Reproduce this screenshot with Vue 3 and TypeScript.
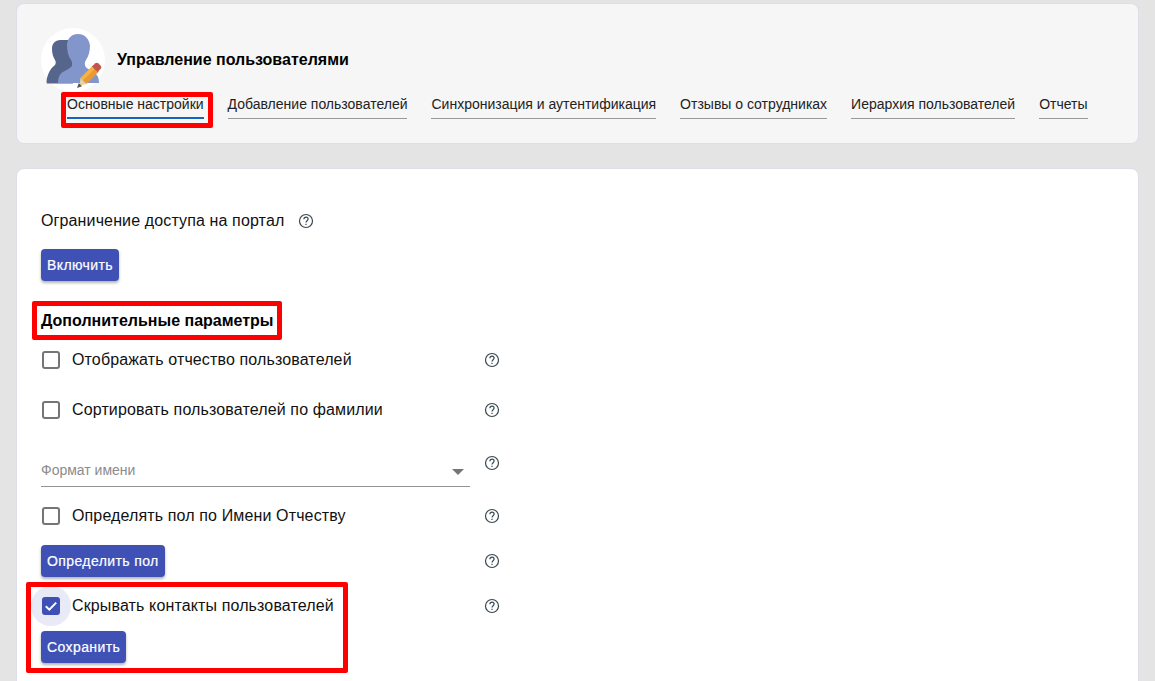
<script setup lang="ts">
import { ref } from "vue";

const tabs = [
  "Основные настройки",
  "Добавление пользователей",
  "Синхронизация и аутентификация",
  "Отзывы о сотрудниках",
  "Иерархия пользователей",
  "Отчеты",
];

const showPatronymic = ref(false);
const sortBySurname = ref(false);
const detectGender = ref(false);
const hideContacts = ref(true);
</script>

<template>
  <div class="page">
    <header class="card head-card">
      <div class="head-top">
        <svg class="avatar" width="64" height="64" viewBox="0 0 64 64">
          <circle cx="32" cy="32" r="32" fill="#fff" />
          <path
            d="M19.500 12c-5.500 0-8.500 3.500-8.500 9 0 4 1 8 3 11 1.200 1.800 1 4-.5 5.500-2.500 2-5.500 5-7.500 12.500-.5 2-.5 5.500 0 5.500h26V12.800c-3-.5-4-.8-12.500-.8z"
            fill="#56658c"
          />
          <path
            d="M37 6c-6.500 0-11 4.500-11 11.500 0 6 1.500 11 4 14.500 1.500 2 1.500 5 .5 6.500-2 3-9.500 4.500-12 9-1 2-1.500 5-1.500 7.500h41c0-2.500-.5-5-1.500-7-2.500-4.500-10-6-12-9.500-1-1.500-1-4.500.5-6.500 2.500-3.500 4-8.500 4-14.500C48 10.500 43.500 6 37 6z"
            fill="#8296cc"
          />
          <path d="M39.500 50 52 37.500l6 6L45.500 56z" fill="#eb9b2b" />
          <path d="M39.500 50 52 37.500l2.500 2.500L42 52.500z" fill="#f3b24d" />
          <path d="M51 38.500l3-3c1-1 2.500-1 3.500 0l2 2c1 1 1 2.500 0 3.500l-3 3z" fill="#c0564c" />
          <path d="M39.500 50l6 6-7 2z" fill="#e8d3a8" />
          <path d="M36 60l1.800-5 3.200 3.200z" fill="#555" />
        </svg>
        <h1 class="head-title">Управление пользователями</h1>
      </div>
      <nav class="tabs">
        <a v-for="(tab, i) in tabs" :key="tab" class="tab" :class="{ 'is-active': i === 0, marked: i === 0 }">{{ tab }}</a>
      </nav>
    </header>

    <main class="card body-card">
      <div class="access-row">
        <span>Ограничение доступа на портал</span>
        <svg class="help" viewBox="0 0 16 16"><circle cx="8" cy="8" r="6.500" /><path d="M5.900 6.300c0-1.300.9-2.100 2.100-2.100s2.100.8 2.100 1.900c0 1.600-2.100 1.700-2.100 3.500M8 10.700v1.400" /></svg>
      </div>
      <button class="btn btn-enable">Включить</button>

      <h2 class="section-title"><span class="marked">Дополнительные параметры</span></h2>

      <div class="opt-row row-first">
        <label class="check-label">
          <input v-model="showPatronymic" type="checkbox" class="check-input" />
          <span class="check-box"></span>
          Отображать отчество пользователей
        </label>
        <svg class="help" viewBox="0 0 16 16"><circle cx="8" cy="8" r="6.500" /><path d="M5.900 6.300c0-1.300.9-2.100 2.100-2.100s2.100.8 2.100 1.900c0 1.600-2.100 1.700-2.100 3.500M8 10.700v1.400" /></svg>
      </div>

      <div class="opt-row row-second">
        <label class="check-label">
          <input v-model="sortBySurname" type="checkbox" class="check-input" />
          <span class="check-box"></span>
          Сортировать пользователей по фамилии
        </label>
        <svg class="help" viewBox="0 0 16 16"><circle cx="8" cy="8" r="6.500" /><path d="M5.900 6.300c0-1.300.9-2.100 2.100-2.100s2.100.8 2.100 1.900c0 1.600-2.100 1.700-2.100 3.500M8 10.700v1.400" /></svg>
      </div>

      <div class="opt-row select-row">
        <div class="select-field">
          <span class="select-label">Формат имени</span>
          <span class="select-arrow"></span>
        </div>
        <svg class="help help-top" viewBox="0 0 16 16"><circle cx="8" cy="8" r="6.500" /><path d="M5.900 6.300c0-1.300.9-2.100 2.100-2.100s2.100.8 2.100 1.900c0 1.600-2.100 1.700-2.100 3.500M8 10.700v1.400" /></svg>
      </div>

      <div class="opt-row row-gender">
        <label class="check-label">
          <input v-model="detectGender" type="checkbox" class="check-input" />
          <span class="check-box"></span>
          Определять пол по Имени Отчеству
        </label>
        <svg class="help" viewBox="0 0 16 16"><circle cx="8" cy="8" r="6.500" /><path d="M5.900 6.300c0-1.300.9-2.100 2.100-2.100s2.100.8 2.100 1.900c0 1.600-2.100 1.700-2.100 3.500M8 10.700v1.400" /></svg>
      </div>

      <div class="opt-row row-btn">
        <div class="btn-cell"><button class="btn">Определить пол</button></div>
        <svg class="help" viewBox="0 0 16 16"><circle cx="8" cy="8" r="6.500" /><path d="M5.900 6.300c0-1.300.9-2.100 2.100-2.100s2.100.8 2.100 1.900c0 1.600-2.100 1.700-2.100 3.500M8 10.700v1.400" /></svg>
      </div>

      <div class="marked-block marked">
        <div class="opt-row">
          <label class="check-label">
            <input v-model="hideContacts" type="checkbox" class="check-input" />
            <span class="check-box">
              <svg v-if="hideContacts" viewBox="0 0 18 18" width="18" height="18">
                <path d="M3.800 9.300 7.300 12.700 14.200 5.600" fill="none" stroke="#fff" stroke-width="2" />
              </svg>
            </span>
            Скрывать контакты пользователей
          </label>
          <svg class="help" viewBox="0 0 16 16"><circle cx="8" cy="8" r="6.500" /><path d="M5.900 6.300c0-1.300.9-2.100 2.100-2.100s2.100.8 2.100 1.900c0 1.600-2.100 1.700-2.100 3.500M8 10.700v1.400" /></svg>
        </div>
        <button class="btn btn-save">Сохранить</button>
      </div>
    </main>
  </div>
</template>

<style>
html,
body {
  margin: 0;
  height: 681px;
  overflow: hidden;
  background: #e4e4e4;
}
</style>

<style scoped>
.page {
  box-sizing: border-box;
  height: 681px;
  padding: 3px 16px 0;
  overflow: hidden;
  font-family: "Liberation Sans", Arial, sans-serif;
  color: #111;
}

.card {
  box-sizing: border-box;
  border: 1px solid #dcdfe8;
  border-radius: 8px;
}

.head-card {
  height: 141px;
  padding: 24px 24px 0;
  background: #f6f6f6;
}

.head-top {
  display: flex;
  align-items: center;
  gap: 12px;
  height: 64px;
}

.avatar {
  flex-shrink: 0;
}

.head-title {
  margin: 0;
  font-size: 16px;
  font-weight: 700;
  color: #000;
}

.tabs {
  display: flex;
  gap: 24px;
  margin: -5px 0 0 26px;
}

.tab {
  box-sizing: border-box;
  height: 32px;
  padding-top: 9px;
  border-bottom: 1px solid #999;
  font-size: 14px;
  line-height: 17px;
  white-space: nowrap;
  color: #222;
}

.tab.is-active {
  border-bottom: 2px solid #1565c0;
}

.marked {
  position: relative;
}

.marked::after {
  content: "";
  position: absolute;
  border: 5px solid #f00;
  border-radius: 2px;
  pointer-events: none;
}

.tab.marked::after {
  left: -6px;
  right: -9px;
  top: 5px;
  bottom: -11px;
}

.body-card {
  height: 560px;
  margin-top: 24px;
  padding: 32px 24px 0;
  background: #fff;
}

.access-row {
  display: flex;
  align-items: center;
  gap: 14px;
  height: 40px;
  font-size: 16px;
  letter-spacing: 0.13px;
}

.btn {
  display: block;
  height: 32px;
  padding: 0 6px;
  border: none;
  border-radius: 4px;
  background: #3f51b5;
  color: #fff;
  font-family: inherit;
  font-size: 14px;
  letter-spacing: 0.4px;
  -webkit-text-stroke: 0.2px #fff;
  white-space: nowrap;
  box-shadow: 0 2px 3px rgba(0, 0, 0, 0.3);
}

.btn-enable {
  margin-top: 8px;
}

.section-title {
  height: 24px;
  margin: 27px 0 0;
  font-size: 16px;
  font-weight: 700;
  line-height: 26px;
  color: #000;
}

.section-title .marked {
  display: inline-block;
}

.section-title .marked::after {
  left: -9px;
  right: -8px;
  top: -7px;
  bottom: -6px;
}

.opt-row {
  display: flex;
  align-items: center;
  height: 40px;
}

.row-first {
  margin-top: 8px;
}

.row-second {
  margin-top: 10px;
}

.select-row {
  align-items: flex-start;
  height: 37px;
  margin-top: 20px;
}

.row-gender,
.marked-block {
  margin-top: 9px;
}

.row-btn {
  height: 32px;
  margin-top: 9px;
}

.check-label {
  display: flex;
  align-items: center;
  gap: 12px;
  width: 443px;
  padding-left: 1px;
  font-size: 16px;
  letter-spacing: 0.13px;
  box-sizing: border-box;
  cursor: pointer;
}

.check-input {
  position: absolute;
  opacity: 0;
  pointer-events: none;
}

.check-box {
  position: relative;
  flex-shrink: 0;
  box-sizing: border-box;
  width: 18px;
  height: 18px;
  border: 2px solid #757575;
  border-radius: 3px;
}

.check-input:checked + .check-box {
  border: none;
  background: #3f51b5;
}

.check-input:checked + .check-box::before {
  content: "";
  position: absolute;
  left: -11px;
  top: -11px;
  width: 40px;
  height: 40px;
  border-radius: 50%;
  background: rgba(63, 81, 181, 0.12);
}

.check-box svg {
  position: relative;
  display: block;
}

.select-field {
  position: relative;
  box-sizing: border-box;
  width: 429px;
  height: 37px;
  margin-right: 14px;
  border-bottom: 1px solid #949494;
}

.select-label {
  position: absolute;
  left: 0;
  top: 11px;
  font-size: 14px;
  line-height: 18px;
  color: #8c8c8c;
}

.select-arrow {
  position: absolute;
  right: 6px;
  top: 19px;
  border-left: 6px solid transparent;
  border-right: 6px solid transparent;
  border-top: 6px solid #757575;
}

.btn-cell {
  width: 443px;
}

.help {
  flex-shrink: 0;
  width: 16px;
  height: 16px;
  fill: none;
  stroke: #37474f;
  stroke-width: 1.2;
}

.help-top {
  margin-top: 5px;
}

.marked-block.marked {
  display: block;
}

.marked-block.marked::after {
  left: -15px;
  width: 322px;
  height: 91px;
  top: -4px;
  box-sizing: border-box;
}

.btn-save {
  margin-top: 5px;
}
</style>
